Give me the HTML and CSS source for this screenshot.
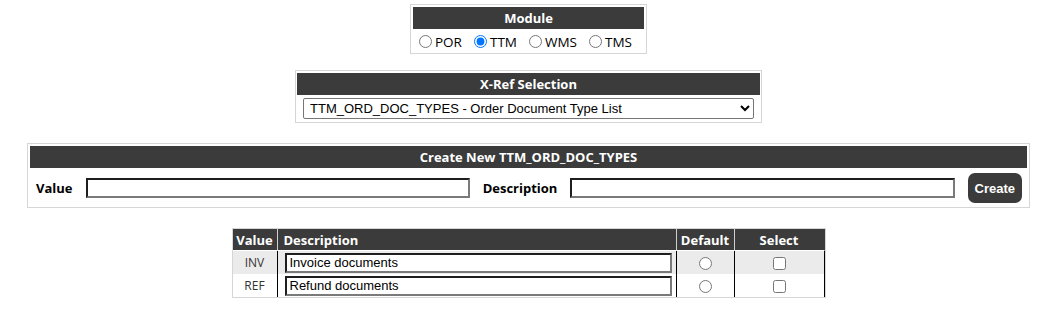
FILE: index.html
```html
<!DOCTYPE html>
<html lang="en">
<head>
    <meta charset="UTF-8">
    <meta name="viewport" content="width=device-width, initial-scale=1.0">
    <title>X-Ref Maintenance</title>
    <link rel="stylesheet" href="styles.css">
</head>
<body>
    <div class="page">

        <!-- Modul -->
        <div class="panel module">
            <div class="panel-head">Module</div>
            <div class="module-opts">
                <label><input type="radio" name="module" value="POR">POR</label>
                <label><input type="radio" name="module" value="TTM" checked>TTM</label>
                <label><input type="radio" name="module" value="WMS">WMS</label>
                <label><input type="radio" name="module" value="TMS">TMS</label>
            </div>
        </div>

        <!-- Vyber X-Ref -->
        <div class="panel xref">
            <div class="panel-head">X-Ref Selection</div>
            <div class="xref-body">
                <select id="xrefSelect">
                    <option selected>TTM_ORD_DOC_TYPES - Order Document Type List</option>
                </select>
            </div>
        </div>

        <!-- Novy zaznam -->
        <div class="panel create">
            <div class="panel-head">Create New TTM_ORD_DOC_TYPES</div>
            <div class="create-row">
                <label for="newValue">Value</label>
                <input type="text" id="newValue" class="field">
                <label for="newDesc">Description</label>
                <input type="text" id="newDesc" class="field">
                <button id="createBtn">Create</button>
            </div>
        </div>

        <!-- Seznam -->
        <table class="xref-table">
            <thead>
                <tr>
                    <th class="col-value">Value</th>
                    <th class="col-desc">Description</th>
                    <th class="col-default">Default</th>
                    <th class="col-select">Select</th>
                </tr>
            </thead>
            <tbody>
                <tr class="odd">
                    <td class="col-value">INV</td>
                    <td class="col-desc"><input type="text" class="field" value="Invoice documents"></td>
                    <td class="col-default"><input type="radio" name="default"></td>
                    <td class="col-select"><input type="checkbox"></td>
                </tr>
                <tr>
                    <td class="col-value">REF</td>
                    <td class="col-desc"><input type="text" class="field" value="Refund documents"></td>
                    <td class="col-default"><input type="radio" name="default"></td>
                    <td class="col-select"><input type="checkbox"></td>
                </tr>
            </tbody>
        </table>
    </div>
</body>
</html>
```

FILE: styles.css
```css
body {
    margin: 0 0 0 4px;
    font-family: "Open Sans", sans-serif;
    font-size: 13px;
    color: #000;
    background: #fff;
}

/* vse na stred */
.page {
    display: flex;
    flex-direction: column;
    align-items: center;
    padding-top: 4px;
}

/* Ramecek kolem sekce */
.panel {
    box-sizing: border-box;
    border: 1px solid #d6d6d6;
    padding: 2px;
}

.panel-head {
    background-color: #3b3b3b;
    color: #fff;
    font-weight: bold;
    text-align: center;
    height: 22px;
    line-height: 22px;
}

.module {
    width: 237px;
}

.module-opts {
    display: flex;
    justify-content: center;
    gap: 12px;
    height: 22px;
    padding-top: 3px;
    box-sizing: border-box;
    align-items: center;
    font-size: 13.5px;
    margin-right: 6px;
}

.module-opts label {
    display: inline-flex;
    align-items: center;
}

.module-opts input {
    margin: 0 3px 0 0;
}

.xref {
    width: 467px;
    margin-top: 16px;
    padding: 2px 1px 3px;
}

.xref-body {
    text-align: center;
    padding-top: 3px;
}

.xref-body select {
    width: 451px;
    height: 21px;
    font-family: "Liberation Sans", Arial, sans-serif;
    font-size: 13px;
    border: 1px solid #767676;
    border-radius: 2px;
    background: #fff;
    padding: 0 2px;
}

.create {
    width: 1003px;
    margin-top: 20px;
}

.create-row {
    display: grid;
    grid-template-columns: auto 1fr auto 1fr auto;
    column-gap: 13px;
    align-items: center;
    padding: 5px 5px 2px 6px;
}

.create-row label {
    font-weight: bold;
}

/* Textova pole s tmavym okrajem */
.field {
    box-sizing: border-box;
    height: 20px;
    border-style: solid;
    border-width: 2px;
    border-color: #1e1e1e #7a7a7a #7a7a7a #1e1e1e;
    font-family: "Liberation Sans", Arial, sans-serif;
    font-size: 13px;
    padding: 0 3px;
    margin: 0;
}

#createBtn {
    background-color: #3b3b3b;
    color: #fff;
    font-family: "Liberation Sans", Arial, sans-serif;
    font-weight: bold;
    font-size: 13px;
    border: none;
    border-radius: 7px;
    height: 30px;
    padding: 0 7px;
    cursor: pointer;
}

/* Tabulka hodnot */
.xref-table {
    margin-top: 20px;
    border: 1px solid #d6d6d6;
    border-spacing: 0;
}

.xref-table th {
    background-color: #3b3b3b;
    color: #fff;
    font-weight: bold;
    height: 21px;
    padding: 0;
    border-right: 1px solid #cfcfcf;
    border-bottom: 1px solid #fff;
}

.xref-table td {
    height: 23px;
    padding: 0;
    border-right: 1px solid #000;
    text-align: center;
    font-size: 12px;
    color: #333;
}

.xref-table th:last-child {
    border-right-color: #3b3b3b;
}

.xref-table tr.odd td {
    background-color: #ebebeb;
}

.xref-table .col-value {
    width: 44px;
}

.xref-table th.col-desc {
    width: 392px;
    text-align: left;
    padding-left: 6px;
}

.xref-table td.col-desc {
    text-align: left;
    padding-left: 7px;
    padding-right: 4px;
}

.xref-table td.col-desc .field {
    width: 387px;
    display: block;
}

.xref-table .col-default {
    width: 57px;
}

.xref-table .col-select {
    width: 89px;
}

.xref-table td input[type="radio"],
.xref-table td input[type="checkbox"] {
    margin: 0;
    vertical-align: middle;
}
```
